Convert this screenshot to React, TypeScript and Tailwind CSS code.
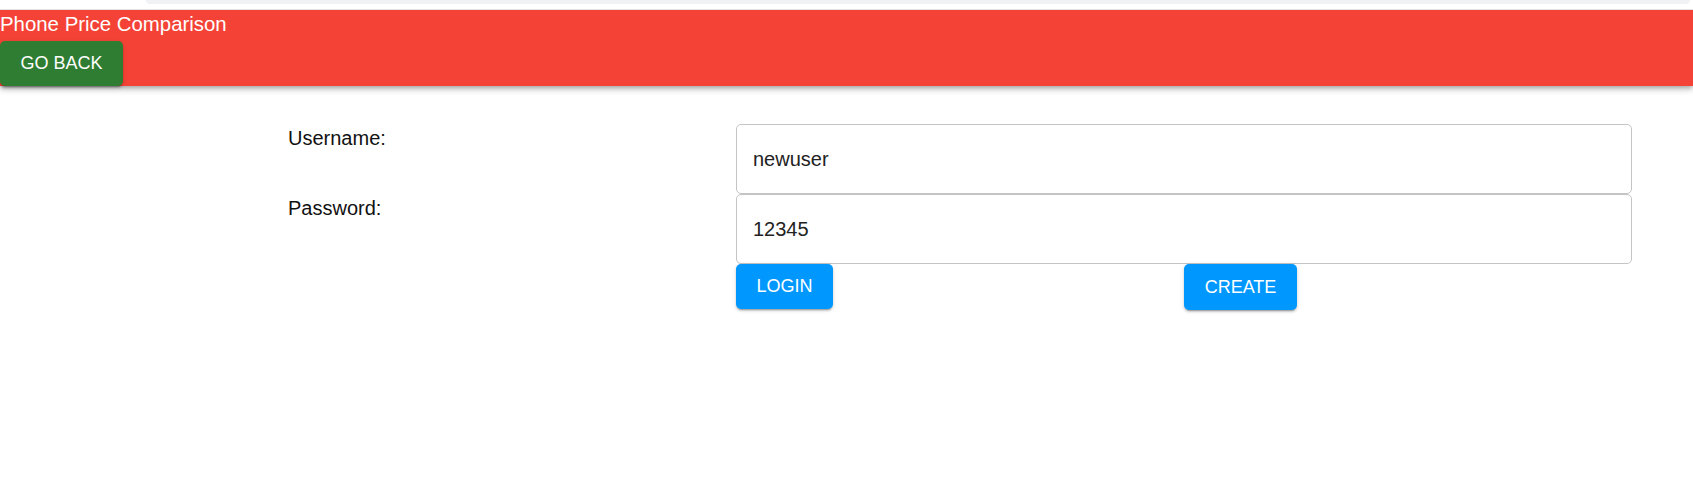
import React from "react";

const font = { fontFamily: '"Liberation Sans", Arial, sans-serif' };

export default function App() {
  return (
    <div className="min-h-screen bg-white text-[#111]" style={font}>
      {/* browser strip remnant */}
      <div className="relative h-[10px] bg-white">
        <div className="absolute left-[146px] right-[3px] top-0 h-[4px] rounded-b-[6px] bg-[#f1f2f4]" />
        <div className="absolute left-0 right-0 bottom-0 h-px bg-[#e3e3e3]" />
      </div>

      <header className="flex flex-col items-start bg-[#f44336] shadow-[0_2px_4px_-1px_rgba(0,0,0,0.2),0_4px_5px_0_rgba(0,0,0,0.14),0_1px_10px_0_rgba(0,0,0,0.12)]">
        <h1 className="text-[20.4px] leading-[29px] text-white">Phone Price Comparison</h1>
        <button className="mt-[2px] flex h-[45px] w-[123px] items-center justify-center rounded-[5px] bg-[#2e7d32] text-[18px] text-white shadow-[0_3px_1px_-2px_rgba(0,0,0,0.2),0_2px_2px_0_rgba(0,0,0,0.14),0_1px_5px_0_rgba(0,0,0,0.12)]">
          GO BACK
        </button>
      </header>

      <main className="mt-[38px] grid grid-cols-[448px_896px] pl-[288px]">
        <label className="pt-[3px] text-[20px] leading-[23px]">Username:</label>
        <input
          readOnly
          value="newuser"
          className="h-[70px] rounded-[5px] border border-[#c4c4c4] px-[16px] text-[20px] text-[#222] outline-none"
        />
        <label className="pt-[3px] text-[20px] leading-[23px]">Password:</label>
        <input
          readOnly
          value="12345"
          className="h-[70px] rounded-[5px] border border-[#c4c4c4] px-[16px] text-[20px] text-[#222] outline-none"
        />
        <div />
        <div className="grid grid-cols-[448px_1fr]">
          <button className="flex h-[45px] w-[97px] items-center justify-center rounded-[5px] bg-[#0098ff] text-[18px] text-white shadow-[0_3px_1px_-2px_rgba(0,0,0,0.2),0_2px_2px_0_rgba(0,0,0,0.14),0_1px_5px_0_rgba(0,0,0,0.12)]">
            LOGIN
          </button>
          <button className="flex h-[46px] w-[113px] items-center justify-center rounded-[5px] bg-[#0098ff] text-[18px] text-white shadow-[0_3px_1px_-2px_rgba(0,0,0,0.2),0_2px_2px_0_rgba(0,0,0,0.14),0_1px_5px_0_rgba(0,0,0,0.12)]">
            CREATE
          </button>
        </div>
      </main>
    </div>
  );
}
